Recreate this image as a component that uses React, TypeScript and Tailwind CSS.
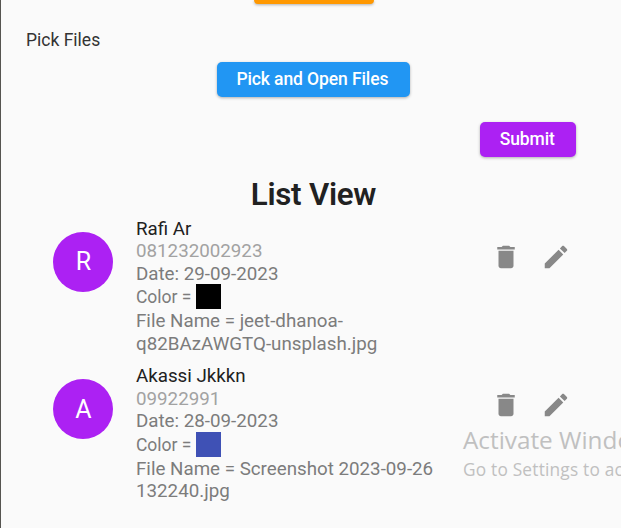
type Entry = {
  initial: string;
  name: string;
  phone: string;
  date: string;
  swatch: string;
  file: string[];
};

const entries: Entry[] = [
  {
    initial: 'R',
    name: 'Rafi Ar',
    phone: '081232002923',
    date: '29-09-2023',
    swatch: 'bg-black',
    file: ['jeet-dhanoa-', 'q82BAzAWGTQ-unsplash.jpg'],
  },
  {
    initial: 'A',
    name: 'Akassi Jkkkn',
    phone: '09922991',
    date: '28-09-2023',
    swatch: 'bg-[#3f51b5]',
    file: ['Screenshot 2023-09-26', '132240.jpg'],
  },
];

function DeleteIcon() {
  return (
    <svg viewBox="0 0 24 24" className="size-[30px]" fill="currentColor">
      <path d="M6 19c0 1.1.9 2 2 2h8c1.1 0 2-.9 2-2V7H6v12zM19 4h-3.5l-1-1h-5l-1 1H5v2h14V4z" />
    </svg>
  );
}

function EditIcon() {
  return (
    <svg viewBox="0 0 24 24" className="size-[30px]" fill="currentColor">
      <path d="M3 17.25V21h3.75L17.81 9.94l-3.75-3.75L3 17.25zM20.71 7.04c.39-.39.39-1.02 0-1.41l-2.34-2.34c-.39-.39-1.02-.39-1.41 0l-1.83 1.83 3.75 3.75 1.83-1.83z" />
    </svg>
  );
}

function Row({ entry }: { entry: Entry }) {
  return (
    <li className="flex h-[147.5px] items-start pl-[52.4px]">
      <div className="mt-[14.5px] flex size-[60px] shrink-0 items-center justify-center rounded-full bg-[#ac21f3] pt-px text-[25px] text-white">
        {entry.initial}
      </div>
      <div className="ml-[22.6px] mt-[0.5px] w-[300px] shrink-0 whitespace-nowrap text-[18.75px] leading-[22.5px] text-[#7c7c7c]">
        <div className="text-[#212121]">{entry.name}</div>
        <div className="text-[#a2a2a2]">{entry.phone}</div>
        <div>Date: {entry.date}</div>
        <div className="flex h-[25px] items-center">
          <span className="w-[60px] text-[17.5px]">Color =</span>
          <span className={`-mt-[2px] size-[25px] ${entry.swatch}`} />
        </div>
        <div>File Name = {entry.file[0]}</div>
        <div>{entry.file[1]}</div>
      </div>
      <div className="ml-[55px] mt-[25px] flex gap-5 text-[#888888]">
        <button aria-label="Delete"><DeleteIcon /></button>
        <button aria-label="Edit"><EditIcon /></button>
      </div>
    </li>
  );
}

export default function App() {
  return (
    <main className="relative h-[528px] w-[621px] overflow-hidden border-l border-[#555450] bg-[#fafafa] font-[Roboto,sans-serif] text-[#212121]">
      <div className="flex h-full flex-col">
        <div className="ml-[252.6px] h-1 w-[120px] shrink-0 rounded-b-[5px] bg-[#ff9800] shadow-[0_1px_3px_rgba(0,0,0,0.3)]" />
        <div className="ml-[25px] mt-[25px] h-[22px] text-[17.5px] leading-[22px] text-[#333333]">Pick Files</div>
        <button className="ml-[215.6px] mt-[11px] h-[35px] w-[193.6px] shrink-0 rounded-[5px] bg-[#2196f3] pr-0.5 text-[17.5px] font-medium tracking-[-0.1px] text-white shadow-[0_1px_3px_rgba(0,0,0,0.3)]">
          Pick and Open Files
        </button>
        <button className="ml-[478.6px] mt-[25px] h-[35px] w-[96.4px] shrink-0 rounded-[5px] bg-[#ac21f3] pr-px text-[17.5px] font-medium tracking-[-0.1px] text-white shadow-[0_1px_3px_rgba(0,0,0,0.3)]">
          Submit
        </button>
        <h1 className="ml-[2px] mt-[20px] h-[36px] w-[621px] shrink-0 text-center text-[31.25px] font-semibold leading-[36px] tracking-[-0.25px]">
          List View
        </h1>
        <ul className="mt-[4px] flex flex-col">
          {entries.map((entry) => (
            <Row key={entry.name} entry={entry} />
          ))}
        </ul>
      </div>
      <div className="pointer-events-none absolute left-[462px] top-[424px] whitespace-nowrap font-['Open_Sans',sans-serif] text-[#c0c0c0]">
        <div className="text-[24.3px] leading-[32px]">Activate Windows</div>
        <div className="mt-[2px] text-[17.3px] leading-[24px] tracking-[0.2px]">Go to Settings to activate Windows.</div>
      </div>
    </main>
  );
}
